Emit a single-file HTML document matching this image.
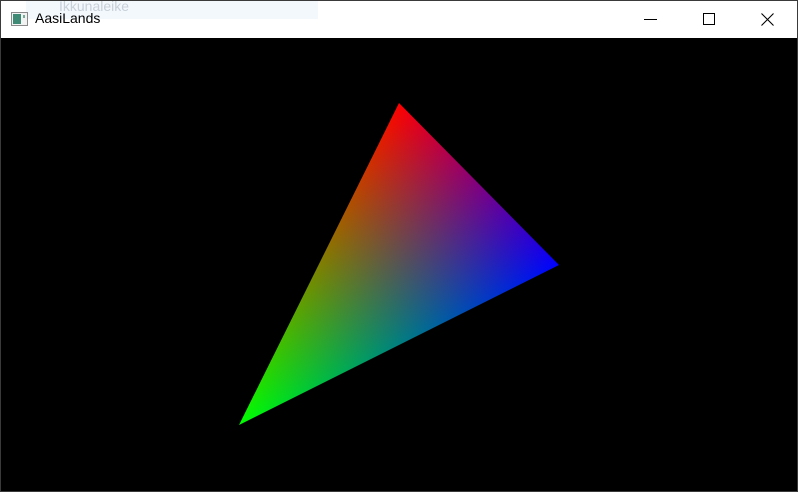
<!DOCTYPE html>
<html><head><meta charset="utf-8"><style>
html,body{margin:0;padding:0;width:798px;height:492px;overflow:hidden;background:#000}
.win{position:absolute;left:0;top:0;width:796px;height:490px;border:1px solid #3a3a3a;background:#000}
.tb{position:absolute;left:0;top:0;width:796px;height:37px;background:#fff}
.title{position:absolute;left:34px;top:9px;font:14px "Liberation Sans",sans-serif;color:#000}
.ghost{position:absolute;left:25px;top:0;width:292px;height:18px;background:#f3f8fd}
.ghost span{position:absolute;left:33px;top:-3px;font:14px "Liberation Sans",sans-serif;color:#c8d0d8}
svg{position:absolute;left:0;top:0}
</style></head><body>
<div class="win">
<div class="tb">
<div class="ghost"><span>Ikkunaleike</span></div>
<svg width="30" height="30" style="left:10px;top:11px">
<rect x="0.5" y="0.5" width="16" height="13" fill="#f2f2f2" stroke="#8a8a8a"/>
<rect x="2" y="2" width="8" height="10" fill="#3f8a74"/>
<rect x="12" y="3" width="2" height="3" fill="#7a9"/>
</svg>
<div class="title">AasiLands</div>
<svg width="796" height="37">
<line x1="643" y1="18.5" x2="656" y2="18.5" stroke="#000" stroke-width="1"/>
<rect x="702.5" y="12.5" width="11" height="11" fill="none" stroke="#000"/>
<path d="M760.5 12.5 L772.5 24.5 M772.5 12.5 L760.5 24.5" stroke="#000" stroke-width="1.1"/>
</svg>
</div>
</div>
<svg width="798" height="492" style="left:0;top:0">
<defs>
<linearGradient id="r" gradientUnits="userSpaceOnUse" x1="399" y1="103" x2="495.8" y2="296.6"><stop offset="0" stop-color="#f00"/><stop offset="1" stop-color="#000"/></linearGradient>
<linearGradient id="b" gradientUnits="userSpaceOnUse" x1="559" y1="265" x2="366.1" y2="169.2"><stop offset="0" stop-color="#00f"/><stop offset="1" stop-color="#000"/></linearGradient>
<linearGradient id="g" gradientUnits="userSpaceOnUse" x1="239" y1="425" x2="481" y2="186"><stop offset="0" stop-color="#0f0"/><stop offset="1" stop-color="#000"/></linearGradient>
</defs>
<g style="isolation:isolate">
<polygon points="399,103 559,265 239,425" fill="url(#r)"/>
<polygon points="399,103 559,265 239,425" fill="url(#b)" style="mix-blend-mode:plus-lighter"/>
<polygon points="399,103 559,265 239,425" fill="url(#g)" style="mix-blend-mode:plus-lighter"/>
</g>
</svg>
</body></html>
